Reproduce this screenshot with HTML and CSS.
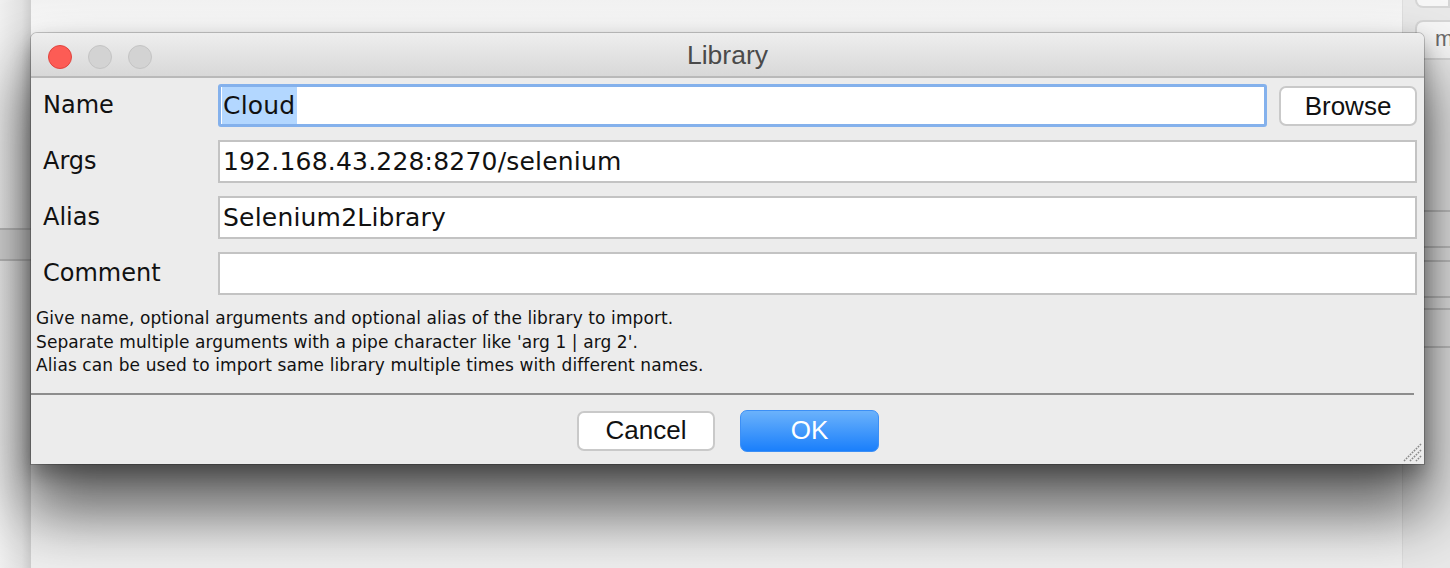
FILE: index.html
```html
<!DOCTYPE html>
<html>
<head>
<meta charset="utf-8">
<title>Library</title>
<link rel="stylesheet" href="styles.css">
</head>
<body>
<div class="desktop">
  <div class="bg-left">
    <div class="bg-band"></div>
  </div>
  <div class="bg-right">
    <div class="bg-tab bg-tab-top"></div>
    <div class="bg-tab bg-tab-m">m</div>
    <div class="bg-lines">
      <div class="bg-line l1"></div>
      <div class="bg-line l2"></div>
      <div class="bg-line l3"></div>
      <div class="bg-line l4"></div>
      <div class="bg-line l5"></div>
      <div class="bg-line l6"></div>
    </div>
  </div>

  <div class="window">
    <div class="titlebar">
      <div class="lights">
        <span class="light close"></span>
        <span class="light"></span>
        <span class="light"></span>
      </div>
      <div class="title">Library</div>
    </div>
    <div class="content">
      <div class="form">
        <label class="label">Name</label>
        <div class="field focused"><span class="sel">Cloud</span></div>
        <button class="btn browse">Browse</button>

        <label class="label">Args</label>
        <div class="field span2">192.168.43.228:8270/selenium</div>

        <label class="label">Alias</label>
        <div class="field span2">Selenium2Library</div>

        <label class="label">Comment</label>
        <div class="field span2"></div>
      </div>
      <div class="help">
        <div>Give name, optional arguments and optional alias of the library to import.</div>
        <div>Separate multiple arguments with a pipe character like 'arg 1 | arg 2'.</div>
        <div>Alias can be used to import same library multiple times with different names.</div>
      </div>
      <div class="separator"></div>
      <div class="actions">
        <button class="btn cancel">Cancel</button>
        <button class="btn ok">OK</button>
      </div>
    </div>
    <svg class="grip" width="20" height="20" viewBox="0 0 20 20">
      <path d="M19 2 L2 19 M19 8 L8 19 M19 14 L14 19" stroke="#8a8a8a" stroke-width="1.6" stroke-dasharray="1.6 1.2" fill="none"/>
    </svg>
  </div>
</div>
</body>
</html>
```

FILE: styles.css
```css
* { box-sizing: border-box; }
html, body { margin: 0; padding: 0; }
body {
  width: 1450px;
  height: 568px;
  overflow: hidden;
  font-family: "DejaVu Sans", sans-serif;
}
.desktop {
  position: relative;
  width: 1450px;
  height: 568px;
  background: linear-gradient(to bottom, #f2f2f2 0px, #fbfbfb 30px, #f4f4f4 200px, #f0f0f0 568px);
  display: flex;
  justify-content: space-between;
}
.bg-left {
  width: 31px;
  height: 100%;
  background: linear-gradient(to right, #f0f0f0, #e2e2e2 70%, #cfcfcf);
  padding-top: 228px;
}
.bg-band {
  height: 33px;
  border-top: 2px solid #bdbdbd;
  border-bottom: 2px solid #bdbdbd;
  background: #d9d9d9;
}
.bg-right {
  width: 48px;
  height: 100%;
  background: #e9e9e9;
  border-left: 1px solid #dedede;
  display: flex;
  flex-direction: column;
  padding-left: 12px;
}
.bg-tab {
  background: #f7f7f7;
  border: 2px solid #d6d6d6;
  border-radius: 8px;
}
.bg-tab-top {
  height: 12px;
  margin-top: -4px;
  border-top: none;
  border-radius: 0 0 0 8px;
}
.bg-tab-m {
  margin-top: 12px;
  height: 40px;
  padding: 4px 0 0 18px;
  font-family: "Liberation Sans", sans-serif;
  font-size: 22px;
  color: #6b6b6b;
  border-right: none;
  border-radius: 8px 0 0 8px;
  overflow: hidden;
}
.bg-lines { margin-top: 150px; margin-left: -12px; }
.bg-line { height: 2px; background: #c4c4c4; }
.l1 { margin-top: 0; }
.l2 { margin-top: 34px; }
.l3 { margin-top: 12px; }
.l4 { margin-top: 34px; }
.l5 { margin-top: 10px; }
.l6 { margin-top: 36px; }

.window {
  position: absolute;
  left: 31px;
  top: 33px;
  width: 1393px;
  height: 431px;
  background: #ececec;
  border-radius: 6px 6px 0 0;
  box-shadow: 0 0 0 1px rgba(0,0,0,0.2), 0 44px 64px 6px rgba(0,0,0,0.6), 0 10px 20px rgba(0,0,0,0.3);
  display: flex;
  flex-direction: column;
}
.titlebar {
  height: 45px;
  flex: none;
  position: relative;
  display: flex;
  align-items: center;
  justify-content: center;
  background: linear-gradient(to bottom, #eeeeee, #d8d8d8);
  border-bottom: 2px solid #b9b9b9;
  border-radius: 6px 6px 0 0;
}
.lights {
  position: absolute;
  left: 17px;
  top: 12px;
  display: flex;
  gap: 16px;
}
.light {
  width: 24px;
  height: 24px;
  border-radius: 50%;
  background: #d3d3d3;
  border: 1px solid #c4c4c4;
}
.light.close {
  background: #fd5c55;
  border-color: #e0443e;
}
.title {
  font-family: "Liberation Sans", sans-serif;
  font-size: 26.5px;
  color: #4a4a4a;
  padding-top: 2px;
}
.content {
  flex: 1;
  display: flex;
  flex-direction: column;
  padding: 6px 7px 0 0;
}
.form {
  display: grid;
  grid-template-columns: 163px 1fr 138px;
  column-gap: 12px;
  row-gap: 13px;
  padding-left: 12px;
}
.label {
  font-size: 24px;
  color: #111;
  display: flex;
  align-items: center;
  padding-bottom: 2px;
}
.field {
  height: 43px;
  background: #fff;
  border: 2px solid #c3c3c3;
  font-size: 25px;
  letter-spacing: 0.2px;
  color: #111;
  padding: 0 3px;
  display: flex;
  align-items: center;
  white-space: nowrap;
  overflow: hidden;
}
.field.span2 { grid-column: 2 / 4; }
.field.focused {
  border: 3px solid #84b1ec;
  border-radius: 3px;
  padding: 0 1px;
  align-items: stretch;
}
.sel {
  background: #b3d7ff;
  display: flex;
  align-items: center;
  padding-left: 1px;
  padding-right: 2px;
}
.btn {
  font-family: "Liberation Sans", sans-serif;
  font-size: 26px;
  color: #111;
  background: #fff;
  border: 2px solid #c9c9c9;
  border-radius: 7px;
  padding: 0;
}
.browse {
  height: 40px;
  align-self: center;
  margin-top: 1px;
}
.help {
  margin-top: 12px;
  padding-left: 5px;
  font-family: "DejaVu Sans", sans-serif;
  font-size: 17px;
  letter-spacing: 0.1px;
  line-height: 23.5px;
  color: #111;
}
.separator {
  margin-top: 15px;
  height: 2px;
  background: #8d8d8d;
  margin-right: 3px;
}
.actions {
  display: flex;
  justify-content: center;
  align-items: center;
  gap: 25px;
  padding-top: 15px;
  padding-left: 8px;
}
.cancel {
  width: 138px;
  height: 40px;
}
.ok {
  width: 139px;
  height: 42px;
  color: #fff;
  border: 1px solid #3c8ff5;
  background: linear-gradient(to bottom, #6bb2fb, #1a7ffb);
}
.grip {
  position: absolute;
  right: 2px;
  bottom: 2px;
}
```
